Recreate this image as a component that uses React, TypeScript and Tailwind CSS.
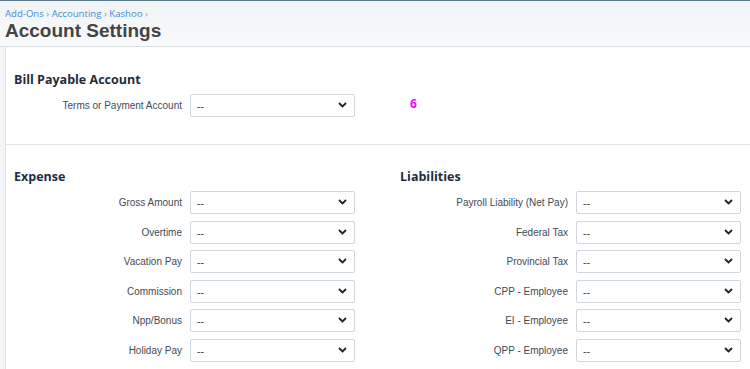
import React from 'react'

const expense = ['Gross Amount', 'Overtime', 'Vacation Pay', 'Commission', 'Npp/Bonus', 'Holiday Pay']
const liabilities = ['Payroll Liability (Net Pay)', 'Federal Tax', 'Provincial Tax', 'CPP - Employee', 'EI - Employee', 'QPP - Employee']

const font = { fontFamily: '"Open Sans", "DejaVu Sans", sans-serif' }
const labelFont = { fontFamily: '"Liberation Sans", Arial, sans-serif' }

function Chevron() {
  return (
    <svg width="9" height="6" viewBox="0 0 9 6" className="pointer-events-none absolute right-[8px] top-[8px]">
      <path d="M1 1l3.5 3.5L8 1" fill="none" stroke="#222" strokeWidth="1.8" />
    </svg>
  )
}

function Select() {
  return (
    <div className="relative w-[165px] h-[23px]">
      <select className="appearance-none block w-full h-[23px] py-0 leading-[21px] border border-[#cfd6dd] rounded-[2px] bg-white pl-[6px] text-[11px] text-[#333] outline-none">
        <option>--</option>
      </select>
      <Chevron />
    </div>
  )
}

function Row({ label }: { label: string }) {
  return (
    <div className="flex items-center h-[29.5px]">
      <label className="w-[184px] shrink-0 text-right pr-[8px] text-[10px] text-[#3f4a55]" style={labelFont}>
        {label}
      </label>
      <Select />
    </div>
  )
}

export default function App() {
  return (
    <div className="w-[750px] h-[369px] overflow-hidden bg-[#f4f5f6]" style={font}>
      <div className="h-px bg-[#5b7a89]" />
      {/* header */}
      <div className="h-[46px] bg-gradient-to-b from-[#f1f3f5] to-[#f9fafb] border-b border-[#dcdfe2] pl-[5px] pt-[7px]">
        <div className="text-[9.6px] leading-[12px] text-[#3d8fd6]">
          Add-Ons <span className="text-[#8a9aa8]">›</span> Accounting <span className="text-[#8a9aa8]">›</span> Kashoo <span className="text-[#8a9aa8]">›</span>
        </div>
        <h1 className="text-[19px] leading-[22px] font-bold text-[#444]" style={labelFont}>
          Account Settings
        </h1>
      </div>

      <div className="ml-[5px] border-l border-[#dcdfe2] bg-white h-full">
        {/* bill payable */}
        <div className="h-[98px] border-b border-[#e2e4e6] pt-[25px] relative">
          <h2 className="pl-[8px] text-[12.5px] leading-[16px] font-bold text-[#1f2d3d]">Bill Payable Account</h2>
          <div className="mt-[3px]">
            <Row label="Terms or Payment Account" />
          </div>
          <span className="absolute left-[404px] top-[48px] text-[12px] font-bold text-[#ff00ff]">6</span>
        </div>

        {/* expense / liabilities */}
        <div className="grid grid-cols-[386px_1fr] pt-[24px]">
          <div>
            <h2 className="pl-[8px] text-[12.5px] leading-[16px] font-bold text-[#1f2d3d]">Expense</h2>
            <div className="mt-[3px]">
              {expense.map((l) => (
                <Row key={l} label={l} />
              ))}
            </div>
          </div>
          <div>
            <h2 className="pl-[8px] text-[12.5px] leading-[16px] font-bold text-[#1f2d3d]">Liabilities</h2>
            <div className="mt-[3px]">
              {liabilities.map((l) => (
                <Row key={l} label={l} />
              ))}
            </div>
          </div>
        </div>
      </div>
    </div>
  )
}
